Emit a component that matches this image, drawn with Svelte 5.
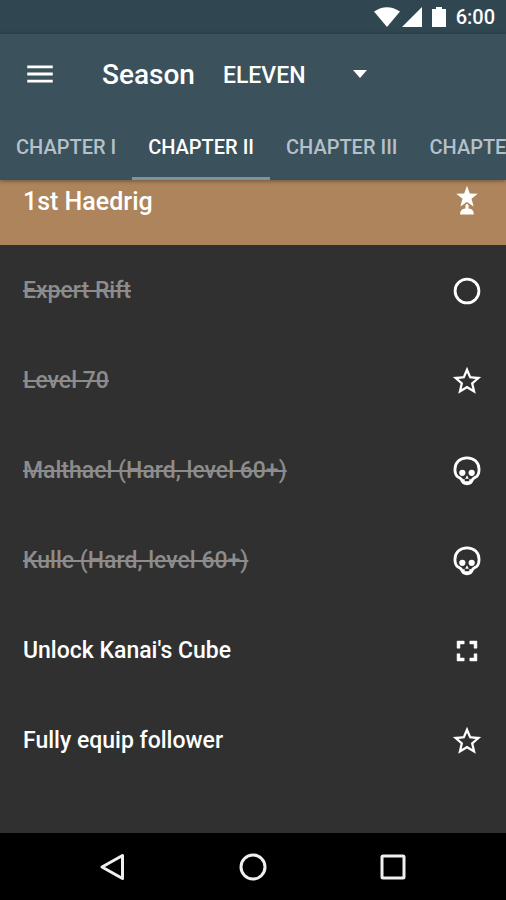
<script>
  const seasons = ["ELEVEN", "TEN", "NINE"];
  const chapters = ["CHAPTER I", "CHAPTER II", "CHAPTER III", "CHAPTER IV"];

  let season = $state("ELEVEN");
  let chapter = $state("CHAPTER II");
  let tasks = $state([
    { name: "Expert Rift", icon: "circle", done: true },
    { name: "Level 70", icon: "star", done: true },
    { name: "Malthael (Hard, level 60+)", icon: "skull", done: true },
    { name: "Kulle (Hard, level 60+)", icon: "skull", done: true },
    { name: "Unlock Kanai's Cube", icon: "cube", done: false },
    { name: "Fully equip follower", icon: "star", done: false },
  ]);
</script>

{#snippet icon(name)}
  <svg class="icon" viewBox="0 0 24 24" aria-hidden="true">
    {#if name === "circle"}
      <circle cx="12" cy="12" r="8.4" fill="none" stroke="currentColor" stroke-width="2" />
    {:else if name === "star"}
      <path d="M22 9.24l-7.19-.62L12 2 9.19 8.63 2 9.24l5.46 4.73L5.82 21 12 17.27 18.18 21l-1.63-7.03L22 9.24zM12 15.4l-3.76 2.27 1-4.28-3.32-2.88 4.38-.38L12 6.1l1.71 4.04 4.38.38-3.32 2.88 1 4.28L12 15.4z" />
    {:else if name === "skull"}
      <path d="M12 2.7C7 2.7 3.500 6.200 3.500 10.700c0 2.300.5 4.200 1.800 5.200 1.100.8 2.200.9 2.700 2 .5 1.300.9 3.100 4 3.100s3.500-1.800 4-3.100c.5-1.100 1.600-1.200 2.700-2 1.300-1 1.800-2.900 1.800-5.200 0-4.500-3.500-8-8.500-8z" fill="none" stroke="currentColor" stroke-width="2" />
      <circle cx="8.700" cy="13.300" r="2.200" />
      <circle cx="15.300" cy="13.300" r="2.200" />
      <path d="M12 15l1.300 2.400h-2.600zM9 17.800h1.400v1.400h3.200v-1.400H15V21H9z" />
    {:else if name === "cube"}
      <path d="M7 14H5v5h5v-2H7v-3zm-2-4h2V7h3V5H5v5zm12 7h-3v2h5v-5h-2v3zM14 5v2h3v3h2V5h-5z" stroke="currentColor" stroke-width="0.4" />
    {:else if name === "trophy"}
      <path d="M12 1.300l2 5.400 5.600.2-4.400 3.500 1.500 5.500-4.700-3.200-4.700 3.200 1.500-5.500-4.400-3.500 5.600-.2zM10.900 14.800l1.100-.8 1.100.8v2.500c2.600.2 3.700 1.700 3.700 4.200H7.200c0-2.500 1.100-4 3.700-4.200z" />
    {/if}
  </svg>
{/snippet}

<div class="app">
  <div class="status">
    <svg class="wifi" viewBox="0 0 26 20" aria-hidden="true"><path d="M0 4.500Q13-4 26 4.500L13 20z" /></svg>
    <svg class="signal" viewBox="0 0 20 20" aria-hidden="true"><path d="M20 0v20H0z" /></svg>
    <svg class="battery" viewBox="0 0 14 20" aria-hidden="true"><path d="M4 0h6v2h4v18H0V2h4z" /></svg>
    <span>6:00</span>
  </div>

  <header>
    <div class="toolbar">
      <button class="menu" aria-label="Menu">
        <svg class="icon" viewBox="0 0 24 24"><path d="M3 18h18v-2H3v2zm0-5h18v-2H3v2zm0-7v2h18V6H3z" /></svg>
      </button>
      <label for="season">Season</label>
      <div class="picker">
        <select id="season" bind:value={season}>
          {#each seasons as s}
            <option value={s}>{s}</option>
          {/each}
        </select>
        <svg class="arrow" viewBox="0 0 14 8" aria-hidden="true"><path d="M0 0h14L7 8z" /></svg>
      </div>
    </div>
    <nav class="tabs">
      {#each chapters as c}
        <button class:active={c === chapter} onclick={() => (chapter = c)}>{c}</button>
      {/each}
    </nav>
  </header>

  <main>
    <h2>
      <span>1st Haedrig</span>
      {@render icon("trophy")}
    </h2>
    <ul>
      {#each tasks as task}
        <li>
          <button class="task" class:done={task.done} aria-pressed={task.done} onclick={() => (task.done = !task.done)}>
            <span>{task.name}</span>
            {@render icon(task.icon)}
          </button>
        </li>
      {/each}
    </ul>
  </main>

  <footer>
    <button aria-label="Back">
      <svg viewBox="0 0 28 28"><path d="M3 14L23.500 2.500v23z" /></svg>
    </button>
    <button aria-label="Home">
      <svg viewBox="0 0 28 28"><circle cx="14" cy="14" r="12" /></svg>
    </button>
    <button aria-label="Recent apps">
      <svg viewBox="0 0 28 28"><rect x="3" y="3" width="22" height="22" rx="1" /></svg>
    </button>
  </footer>
</div>

<style>
  :global(body) { background: #303030; }
  .app {
    display: flex;
    flex-direction: column;
    min-height: 100vh;
    overflow: hidden;
    background: #303030;
    color: #fff;
    font-family: Roboto, "Noto Sans", sans-serif;
    font-weight: 500;
  }
  button, select {
    padding: 0;
    border: 0;
    background: none;
    color: inherit;
    font: inherit;
    cursor: pointer;
  }
  svg { display: block; flex: none; fill: currentColor; }
  .icon { width: 34px; height: 34px; }

  .status {
    display: flex;
    align-items: center;
    justify-content: flex-end;
    height: 34px;
    padding: 0 11px;
    background: #304650;
    font-size: 20px;
  }
  .wifi { width: 26px; height: 20px; }
  .signal { width: 20px; height: 20px; margin-left: 2px; }
  .battery { width: 14px; height: 20px; margin: 0 10px; }

  header {
    position: relative;
    z-index: 1;
    background: #3b515c;
    box-shadow: 0 1px 4px rgba(0, 0, 0, 0.4);
  }
  .toolbar {
    display: flex;
    align-items: center;
    box-sizing: border-box;
    height: 79px;
    padding: 1px 23px 0;
  }
  .menu { margin-right: 45px; }
  label { font-size: 28px; }
  .picker { position: relative; margin-left: 28px; }
  select {
    width: 160px;
    height: 48px;
    padding-top: 2px;
    appearance: none;
    outline: none;
    font-size: 23px;
  }
  option { background: #3b515c; }
  .arrow {
    position: absolute;
    top: 20px;
    right: 16px;
    width: 14px;
    height: 8px;
    pointer-events: none;
  }
  .tabs { display: flex; height: 67px; overflow: hidden; }
  .tabs button {
    flex: none;
    padding: 4px 16px 0;
    border-bottom: 3px solid transparent;
    color: #b4c0ca;
    font-size: 20px;
  }
  .tabs button.active { border-color: #78979b; color: #fff; }

  main { flex: 1; }
  h2 {
    display: flex;
    align-items: center;
    justify-content: space-between;
    height: 42px;
    margin: 0;
    padding: 0 22px 23px 23px;
    background: #ad845b;
    font-size: 25px;
    font-weight: 500;
  }
  ul { margin: 0; padding: 0; list-style: none; }
  .task {
    display: flex;
    align-items: center;
    justify-content: space-between;
    box-sizing: border-box;
    width: 100%;
    height: 90px;
    padding: 1px 22px 0 23px;
    font-size: 23px;
    text-align: left;
  }
  .done span { color: #8c8c8c; text-decoration: line-through; text-decoration-thickness: 2px; }

  footer {
    display: flex;
    justify-content: center;
    gap: 112px;
    height: 67px;
    background: #000;
  }
  footer svg {
    width: 28px;
    height: 28px;
    fill: none;
    stroke: #f0f0f0;
    stroke-width: 3;
    stroke-linejoin: round;
  }
</style>
